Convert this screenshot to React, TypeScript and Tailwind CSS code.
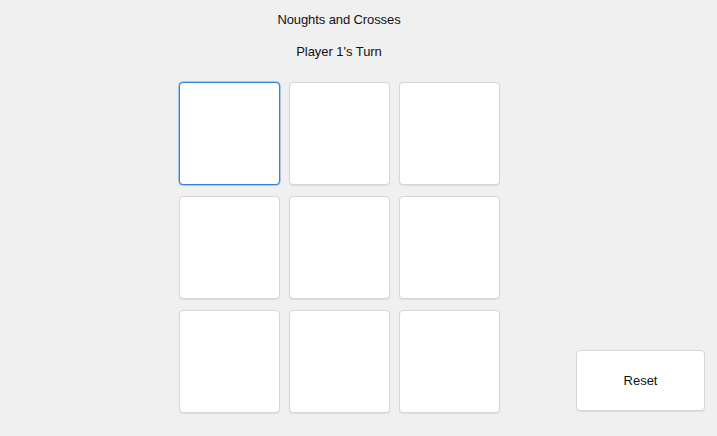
export default function App() {
  const cells = Array.from({ length: 9 });
  return (
    <div
      className="w-[717px] h-[436px] bg-[#f0f0f0] flex text-[#111] overflow-hidden"
      style={{ fontFamily: '"Liberation Sans", Arial, sans-serif' }}
    >
      <div className="ml-[179px] w-[320px] flex flex-col items-center">
        <div className="mt-[11px] h-[17px] leading-[17px] text-[13px] tracking-[-0.1px]">Noughts and Crosses</div>
        <div className="mt-[15px] h-[17px] leading-[17px] text-[13px] tracking-[-0.05px]">Player 1's Turn</div>
        <div className="mt-[22px] grid grid-cols-[101px_101px_101px] grid-rows-[103px_103px_103px] gap-x-[9px] gap-y-[11px]">
          {cells.map((_, i) => (
            <button
              key={i}
              className={
                i === 0
                  ? "bg-white rounded-[4px] border border-[#2f86d6] shadow-[0_0_0_0.5px_#5aa0e0]"
                  : "bg-white rounded-[4px] border border-[#d6d6d6] shadow-[0_1px_1px_rgba(0,0,0,0.08)]"
              }
            />
          ))}
        </div>
      </div>
      <div className="ml-[77px] flex flex-col justify-end pb-[25px]">
        <button className="w-[129px] h-[61px] bg-white rounded-[4px] border border-[#d6d6d6] shadow-[0_1px_1px_rgba(0,0,0,0.08)] text-[13px]">
          Reset
        </button>
      </div>
    </div>
  );
}
